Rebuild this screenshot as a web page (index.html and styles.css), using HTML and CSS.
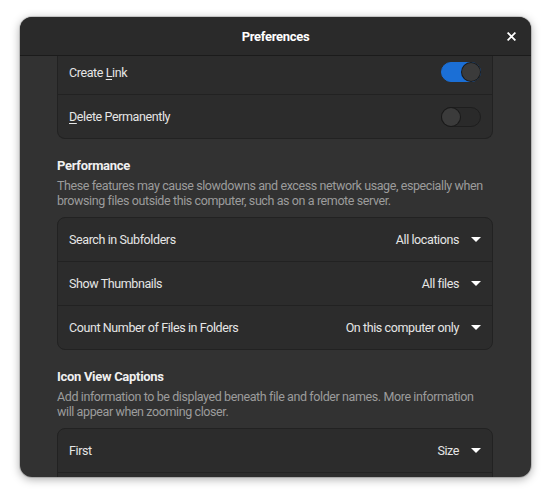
FILE: index.html
```html
<!DOCTYPE html>
<html>
<head>
<meta charset="utf-8">
<link rel="stylesheet" href="styles.css">
</head>
<body>
<div class="win">
  <header class="hb">
    <span class="title">Preferences</span>
    <span class="close">
      <svg width="9" height="9" viewBox="0 0 9 9"><path d="M1.2 1.2 L7.8 7.8 M7.8 1.2 L1.2 7.8" stroke="#fff" stroke-width="1.8" stroke-linecap="square" fill="none"/></svg>
    </span>
  </header>
  <div class="content">
    <div class="card clipped">
      <div class="row first"><span class="label">Create <u>L</u>ink</span><span class="switch on"><span class="knob"></span></span></div>
      <div class="row"><span class="label"><u>D</u>elete Permanently</span><span class="switch"><span class="knob"></span></span></div>
    </div>

    <section class="group">
      <h2 class="heading">Performance</h2>
      <p class="desc">These features may cause slowdowns and excess network usage, especially when browsing files outside this computer, such as on a remote server.</p>
      <div class="card">
        <div class="row"><span class="label">Search in Subfolders</span><span class="value">All locations<span class="arrow"></span></span></div>
        <div class="row"><span class="label">Show Thumbnails</span><span class="value">All files<span class="arrow"></span></span></div>
        <div class="row"><span class="label">Count Number of Files in Folders</span><span class="value">On this computer only<span class="arrow"></span></span></div>
      </div>
    </section>

    <section class="group">
      <h2 class="heading">Icon View Captions</h2>
      <p class="desc">Add information to be displayed beneath file and folder names. More information will appear when zooming closer.</p>
      <div class="card">
        <div class="row"><span class="label">First</span><span class="value">Size<span class="arrow"></span></span></div>
        <div class="row"></div>
      </div>
    </section>
  </div>
</div>
</body>
</html>
```

FILE: styles.css
```css
html, body {
  margin: 0;
  padding: 0;
  background: #ffffff;
}
body {
  width: 550px;
  height: 500px;
  overflow: hidden;
  font-family: Roboto, "Liberation Sans", sans-serif;
  font-size: 12.5px;
  letter-spacing: -0.4px;
  color: #e6e6e6;
}
.win {
  margin: 17px 0 0 20px;
  width: 511px;
  height: 460px;
  border-radius: 12px;
  overflow: hidden;
  background: #323232;
  display: flex;
  flex-direction: column;
  box-shadow: 0 2px 10px rgba(0,0,0,0.35), 0 0 0 1px rgba(0,0,0,0.15);
}
.hb {
  height: 38px;
  flex: none;
  background: #2a2a2a;
  border-bottom: 1px solid #1b1b1b;
  display: flex;
  align-items: center;
  justify-content: center;
  position: relative;
}
.title {
  font-weight: 700;
  font-size: 13px;
  letter-spacing: -0.3px;
  color: #ffffff;
}
.close {
  position: absolute;
  right: 15px;
  top: 15px;
  width: 9px;
  height: 9px;
  display: flex;
}
.content {
  flex: 1;
  overflow: hidden;
  padding: 0 38px 0 37px;
}
.card {
  background: #2c2c2c;
  border: 1px solid #222222;
  border-radius: 8px;
}
.card.clipped {
  border-top: none;
  border-top-left-radius: 0;
  border-top-right-radius: 0;
}
.row {
  height: 43px;
  display: flex;
  align-items: center;
  justify-content: space-between;
  padding: 0 11px;
  border-top: 1px solid #222222;
}
.row:first-child {
  border-top: none;
}
.row.first {
  height: 32px;
  padding-bottom: 6px;
}
.label u {
  text-decoration: underline;
  text-underline-offset: 2px;
  text-decoration-thickness: 1px;
}
.switch {
  width: 38px;
  height: 18px;
  border-radius: 11px;
  border: 1px solid #1e1e1e;
  background: #2a2a2a;
  display: flex;
  align-items: center;
}
.switch .knob {
  width: 18px;
  height: 18px;
  border-radius: 50%;
  background: #3b3b3b;
  box-shadow: 0 0 0 1px #1a1a1a;
}
.switch.on {
  background: #1b6fd6;
  border-color: #1b6fd6;
  justify-content: flex-end;
}
.value {
  display: flex;
  align-items: center;
  color: #e6e6e6;
}
.arrow {
  margin-left: 12px;
  width: 0;
  height: 0;
  border-left: 5px solid transparent;
  border-right: 5px solid transparent;
  border-top: 5px solid #ffffff;
}
.group {
  margin-top: 18px;
}
.heading {
  margin: 0;
  font-size: 13px;
  font-weight: 700;
  line-height: 18px;
  letter-spacing: -0.3px;
  color: #f0f0f0;
}
.desc {
  margin: 3px 0 9px 0;
  line-height: 15px;
  color: #9c9c9c;
}
```
